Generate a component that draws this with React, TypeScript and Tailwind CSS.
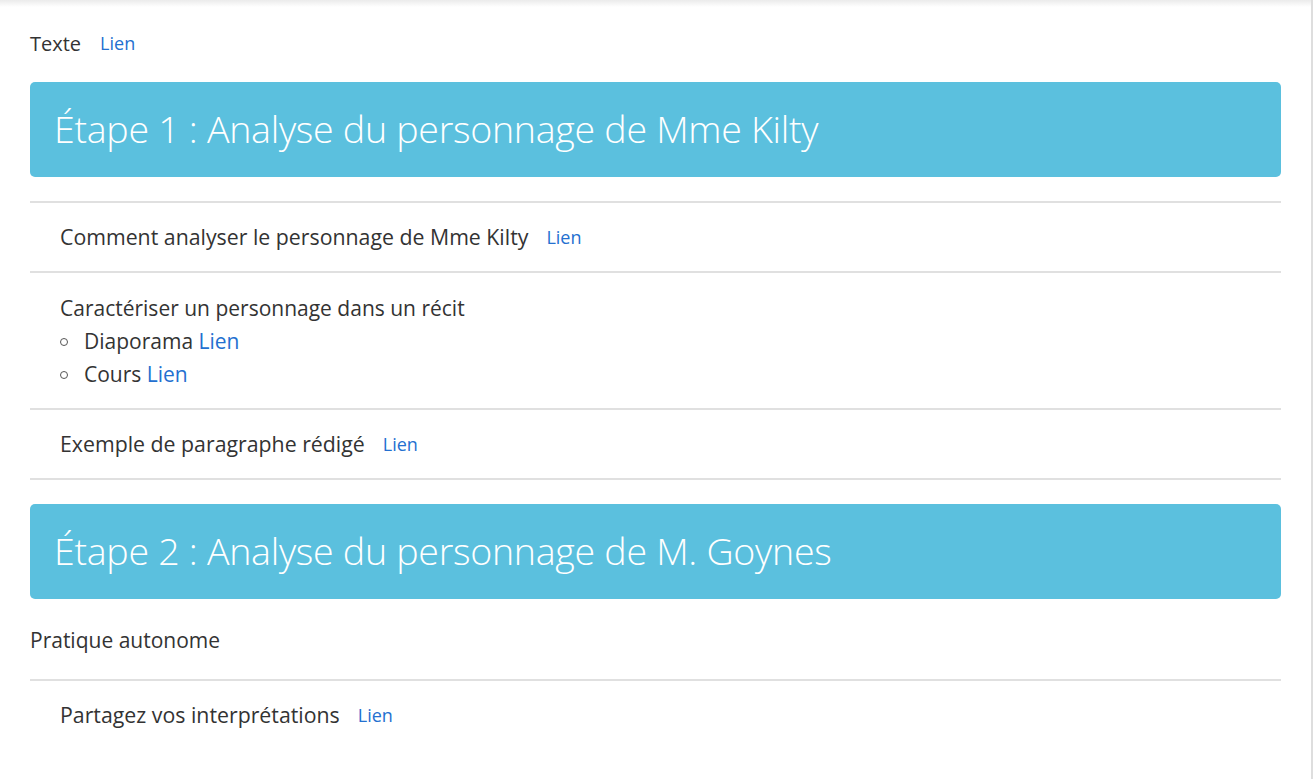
import React from 'react';

const font = { fontFamily: '"Open Sans", "Noto Sans", sans-serif' };

function Lien({ small = true }: { small?: boolean }) {
    return (
        <a href="#" className={`${small ? 'text-[18px]' : 'text-[21px]'} text-[#2470d0]`}>
            Lien
        </a>
    );
}

function StepHeader({ title }: { title: string }) {
    return (
        <div className="h-[95px] rounded-[5px] bg-[#5bc0de] px-[24px] flex items-center">
            <h2 className="text-[37.6px] font-light text-white tracking-[-0.3px]">{title}</h2>
        </div>
    );
}

function Row({ label }: { label: string }) {
    return (
        <div className="h-[68px] pl-[30px] flex items-center gap-[18px]">
            <span className="text-[21.3px]">{label}</span>
            <Lien />
        </div>
    );
}

function Bullet({ label }: { label: string }) {
    return (
        <li className="h-[33px] flex items-center">
            <span className="w-[8px] h-[8px] rounded-full border border-[#555] mr-[16px]" />
            <span className="text-[21px]">
                {label} <Lien small={false} />
            </span>
        </li>
    );
}

export default function App() {
    return (
        <div className="min-h-screen bg-white" style={font}>
            <div className="w-[1313px] min-h-screen border-r-2 border-[#dedede] text-[#333]">
                <div className="h-[7px] bg-linear-to-b from-[#ebebeb] to-white" />
                <div className="w-[1251px] ml-[30px]">
                    <div className="h-[75px] flex items-center gap-[19px] pb-[2px]">
                        <span className="text-[20px]">Texte</span>
                        <Lien />
                    </div>

                    <StepHeader title="Étape 1 : Analyse du personnage de Mme Kilty" />

                    <div className="mt-[24px] border-t-2 border-[#e0e0e0]">
                        <Row label="Comment analyser le personnage de Mme Kilty" />
                        <div className="border-t-2 border-[#e0e0e0] pl-[30px] pt-[19px] pb-[17px]">
                            <div className="h-[33px] flex items-center text-[21px]">
                                Caractériser un personnage dans un récit
                            </div>
                            <ul>
                                <Bullet label="Diaporama" />
                                <Bullet label="Cours" />
                            </ul>
                        </div>
                        <div className="border-t-2 border-[#e0e0e0]">
                            <Row label="Exemple de paragraphe rédigé" />
                        </div>
                        <div className="border-t-2 border-[#e0e0e0]" />
                    </div>

                    <div className="mt-[24px]">
                        <StepHeader title="Étape 2 : Analyse du personnage de M. Goynes" />
                    </div>

                    <div className="h-[80px] flex items-center text-[21px] pt-[3px]">
                        Pratique autonome
                    </div>
                    <div className="border-t-2 border-[#e0e0e0]">
                        <Row label="Partagez vos interprétations" />
                    </div>
                </div>
            </div>
        </div>
    );
}
